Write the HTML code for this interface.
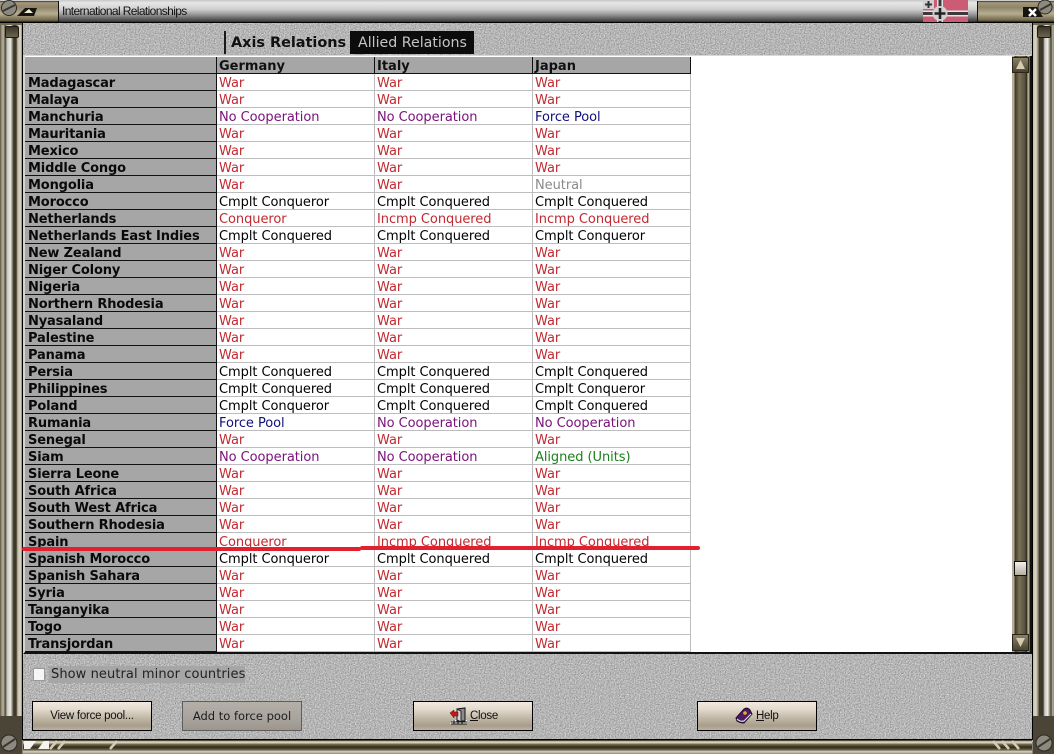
<!DOCTYPE html>
<html><head><meta charset="utf-8"><style>
html,body{margin:0;padding:0;background:#888}
#r{position:relative;width:1054px;height:754px;overflow:hidden;background:#8a8474;font-family:"DejaVu Sans",sans-serif}
#r div{position:absolute;box-sizing:border-box}
.tb{position:absolute;left:25px;top:57px;border-collapse:separate;border-spacing:0;table-layout:fixed;width:666px;background:#fff}
.tb td{height:17px;padding:3px 0 0 2px;font-size:13px;line-height:13px;white-space:nowrap;overflow:hidden;box-sizing:border-box;border-bottom:1px solid #bdbdbd;border-right:1px solid #bdbdbd;color:#000;vertical-align:top;letter-spacing:-.06px}
.tb td:first-child{background:#a6a6a6;font-weight:bold;padding-left:3px;border-right:1px solid #111;border-bottom:1px solid #111;color:#0a0a0a;font-size:13px;letter-spacing:-.15px}
.tb tr.h td{background:#a6a6a6;font-weight:bold;border-right:1px solid #111;border-bottom:1px solid #111;color:#111;letter-spacing:0}
.w{color:#c02a30!important}.n{color:#7a107a!important}.f{color:#10107a!important}.g{color:#1a801a!important}.u{color:#8a8a8a!important}
.btn{border:1px solid #000;background:linear-gradient(#f1e9df 0,#e4dacd 25%,#c4baaa 55%,#a89d8a 85%,#bdb3a3 100%);font:11.5px/28px "Liberation Sans",sans-serif;text-align:center;color:#111;letter-spacing:-.25px}
.rail{background:linear-gradient(90deg,#8d8672 0,#b8b29d 12%,#4a4536 20%,#c9c9c4 30%,#ecebe4 45%,#8a8678 54%,#3d3829 60%,#3d3829 72%,#c4bda6 80%,#ddd7c3 92%,#8f8a78 100%)}
.railr{background:linear-gradient(90deg,#c4bda6 0,#ddd7c3 14%,#8f8a78 24%,#3d3829 30%,#3d3829 48%,#c9c9c4 56%,#ecebe4 70%,#8a8678 80%,#4a4536 86%,#b8b29d 94%,#8d8672 100%)}
.cap{background:linear-gradient(#3a3424 0,#a59a7e 8%,#8f8468 30%,#b7ad90 60%,#6f6549 92%,#1c1810 100%)}
</style></head><body><div id="r">

<!-- textured panel -->
<svg style="position:absolute;left:23px;top:22px" width="1010" height="720"><rect width="1010" height="720" fill="#b4b4b4"/>
<filter id="nz2" x="0" y="0" width="100%" height="100%" color-interpolation-filters="sRGB"><feTurbulence type="fractalNoise" baseFrequency="0.8" numOctaves="2" seed="7"/><feColorMatrix type="saturate" values="0"/><feComponentTransfer><feFuncR type="linear" slope=".7" intercept=".36"/><feFuncG type="linear" slope=".7" intercept=".36"/><feFuncB type="linear" slope=".7" intercept=".36"/><feFuncA type="linear" slope="0" intercept="1"/></feComponentTransfer></filter><rect width="1010" height="720" filter="url(#nz2)"/></svg>

<!-- title bar -->
<div style="left:0;top:0;width:1054px;height:23px;background:linear-gradient(#c8c8c8 0,#e6e6e6 12%,#d0d0d0 40%,#9a9a9a 62%,#555 85%,#3a3a3a 94%,#000 97%)"></div>
<div style="left:62px;top:4px;font:12px/15px 'Liberation Sans',sans-serif;color:#111;letter-spacing:-.62px;white-space:nowrap">International Relationships</div>

<!-- left cap -->
<div class="cap" style="left:0;top:1px;width:59px;height:22px;border-right:1px solid #111;border-bottom:1px solid #000"></div>
<svg style="position:absolute;left:0;top:0" width="60" height="24"><circle cx="9" cy="8" r="7.5" fill="#8c8a80" stroke="#2d2a22"/><path d="M3 11L15 5" stroke="#3a382e" stroke-width="2"/><path d="M17 16L25 8H37L34 16Z" fill="#17150f"/><path d="M24 13L29 9L33 13Z" fill="#f0ead6"/></svg>

<!-- right cap -->
<div class="cap" style="left:977px;top:1px;width:77px;height:22px;border-left:1px solid #111;border-bottom:1px solid #000"></div>
<svg style="position:absolute;left:1000px;top:0" width="54" height="24"><path d="M23 7H37L43 17H23Z" fill="#17150f"/><path d="M29 9L36 16M36 9L29 16" stroke="#fff" stroke-width="2.4"/><circle cx="45" cy="7" r="7" fill="#8c8a80" stroke="#2d2a22"/><path d="M40 10L51 4" stroke="#3a382e" stroke-width="2"/></svg>

<!-- flag -->
<svg style="position:absolute;left:923px;top:0" width="45" height="22"><rect width="45" height="22" fill="#cb5c74"/><rect x="0" y="0" width="11" height="9" fill="#d0d0d0"/><path d="M5.500 1V8M2 4.500H9" stroke="#333" stroke-width="2"/><rect y="12" width="45" height="3" fill="#3a3a3a"/><rect x="15.500" width="3" height="22" fill="#3a3a3a"/><rect y="10.500" width="45" height="1.500" fill="#e4e4e4"/><rect y="15" width="45" height="1.500" fill="#e4e4e4"/><rect x="14" width="1.500" height="22" fill="#e4e4e4"/><rect x="18.500" width="1.500" height="22" fill="#e4e4e4"/><circle cx="17" cy="13.500" r="7.500" fill="#d0d0d0"/><path d="M17 8V19M11.500 13.500H22.500" stroke="#222" stroke-width="2.600"/></svg>

<!-- left frame -->
<div style="left:0;top:23px;width:23px;height:716px;background:#6e6853"></div>
<div class="rail" style="left:1px;top:25px;width:21px;height:692px"></div>
<div style="left:5px;top:26px;width:14px;height:12px;background:linear-gradient(#3b3629,#6a634f);border:1px solid #1d1a12;border-radius:2px"></div>
<div style="left:22px;top:23px;width:1px;height:717px;background:#000"></div>

<!-- right frame -->
<div style="left:1032px;top:23px;width:22px;height:716px;background:#6e6853"></div>
<div class="railr" style="left:1033px;top:25px;width:21px;height:692px"></div>
<div style="left:1037px;top:26px;width:14px;height:12px;background:linear-gradient(#3b3629,#6a634f);border:1px solid #1d1a12;border-radius:2px"></div>
<div style="left:1032px;top:23px;width:1px;height:717px;background:#000"></div>

<!-- corner screws -->
<svg style="position:absolute;left:0;top:716px" width="24" height="38"><rect width="22" height="38" fill="#4a4536"/><circle cx="9" cy="27" r="8" fill="#8c8a80" stroke="#2d2a22"/><path d="M3 31L15 23" stroke="#3a382e" stroke-width="2"/></svg>
<svg style="position:absolute;left:1033px;top:716px" width="21" height="38"><rect width="21" height="38" fill="#4a4536"/><circle cx="11" cy="27" r="8" fill="#8c8a80" stroke="#2d2a22"/><path d="M5 31L17 23" stroke="#3a382e" stroke-width="2"/></svg>

<!-- bottom frame -->
<div style="left:23px;top:739px;width:1009px;height:15px;background:linear-gradient(#000 0,#000 7%,#b7ad90 14%,#e0d8c0 24%,#6f6549 36%,#2e2a1d 55%,#6b634c 72%,#d8d2bd 84%,#8e8874 100%)"></div>
<svg style="position:absolute;left:23px;top:740px" width="100" height="12"><path d="M1 1H13L7 9H1Z" fill="#f4f4f0"/><path d="M21 1H26V9H15Z" fill="#f4f4f0"/><path d="M27 9L34 1M35 9L42 1M87 9L94 1" stroke="#d4cdb6" stroke-width="2.500"/></svg>
<svg style="position:absolute;left:985px;top:740px" width="40" height="12"><path d="M8 1L15 9M17 1L24 9M27 1L34 9" stroke="#d4cdb6" stroke-width="2.500"/></svg>

<!-- tabs -->
<div style="left:224px;top:31px;width:2px;height:23px;background:#1a1a1a"></div>
<div style="left:231px;top:34px;font:bold 14.5px/19px 'DejaVu Sans',sans-serif;color:#111;white-space:nowrap;letter-spacing:-.05px">Axis Relations</div>
<div style="left:350px;top:31px;width:124px;height:23px;background:#0c0c0c;color:#c4c4c4;font:14.2px/24px 'DejaVu Sans',sans-serif;padding-left:8px;white-space:nowrap">Allied Relations</div>

<!-- list area -->
<div style="left:23px;top:55px;width:1008px;height:599px;background:#fff;border-top:1px solid #d8d8d8;border-bottom:2px solid #111;border-left:2px solid #d4d4d4"></div>

<table class="tb"><colgroup><col style="width:192px"><col style="width:158px"><col style="width:158px"><col style="width:158px"></colgroup>
<tr class="h"><td></td><td>Germany</td><td>Italy</td><td>Japan</td></tr>
<tr><td>Madagascar</td><td class="w">War</td><td class="w">War</td><td class="w">War</td></tr>
<tr><td>Malaya</td><td class="w">War</td><td class="w">War</td><td class="w">War</td></tr>
<tr><td>Manchuria</td><td class="n">No Cooperation</td><td class="n">No Cooperation</td><td class="f">Force Pool</td></tr>
<tr><td>Mauritania</td><td class="w">War</td><td class="w">War</td><td class="w">War</td></tr>
<tr><td>Mexico</td><td class="w">War</td><td class="w">War</td><td class="w">War</td></tr>
<tr><td>Middle Congo</td><td class="w">War</td><td class="w">War</td><td class="w">War</td></tr>
<tr><td>Mongolia</td><td class="w">War</td><td class="w">War</td><td class="u">Neutral</td></tr>
<tr><td>Morocco</td><td>Cmplt Conqueror</td><td>Cmplt Conquered</td><td>Cmplt Conquered</td></tr>
<tr><td>Netherlands</td><td class="w">Conqueror</td><td class="w">Incmp Conquered</td><td class="w">Incmp Conquered</td></tr>
<tr><td>Netherlands East Indies</td><td>Cmplt Conquered</td><td>Cmplt Conquered</td><td>Cmplt Conqueror</td></tr>
<tr><td>New Zealand</td><td class="w">War</td><td class="w">War</td><td class="w">War</td></tr>
<tr><td>Niger Colony</td><td class="w">War</td><td class="w">War</td><td class="w">War</td></tr>
<tr><td>Nigeria</td><td class="w">War</td><td class="w">War</td><td class="w">War</td></tr>
<tr><td>Northern Rhodesia</td><td class="w">War</td><td class="w">War</td><td class="w">War</td></tr>
<tr><td>Nyasaland</td><td class="w">War</td><td class="w">War</td><td class="w">War</td></tr>
<tr><td>Palestine</td><td class="w">War</td><td class="w">War</td><td class="w">War</td></tr>
<tr><td>Panama</td><td class="w">War</td><td class="w">War</td><td class="w">War</td></tr>
<tr><td>Persia</td><td>Cmplt Conquered</td><td>Cmplt Conquered</td><td>Cmplt Conquered</td></tr>
<tr><td>Philippines</td><td>Cmplt Conquered</td><td>Cmplt Conquered</td><td>Cmplt Conqueror</td></tr>
<tr><td>Poland</td><td>Cmplt Conqueror</td><td>Cmplt Conquered</td><td>Cmplt Conquered</td></tr>
<tr><td>Rumania</td><td class="f">Force Pool</td><td class="n">No Cooperation</td><td class="n">No Cooperation</td></tr>
<tr><td>Senegal</td><td class="w">War</td><td class="w">War</td><td class="w">War</td></tr>
<tr><td>Siam</td><td class="n">No Cooperation</td><td class="n">No Cooperation</td><td class="g">Aligned (Units)</td></tr>
<tr><td>Sierra Leone</td><td class="w">War</td><td class="w">War</td><td class="w">War</td></tr>
<tr><td>South Africa</td><td class="w">War</td><td class="w">War</td><td class="w">War</td></tr>
<tr><td>South West Africa</td><td class="w">War</td><td class="w">War</td><td class="w">War</td></tr>
<tr><td>Southern Rhodesia</td><td class="w">War</td><td class="w">War</td><td class="w">War</td></tr>
<tr><td>Spain</td><td class="w">Conqueror</td><td class="w">Incmp Conquered</td><td class="w">Incmp Conquered</td></tr>
<tr><td>Spanish Morocco</td><td>Cmplt Conqueror</td><td>Cmplt Conquered</td><td>Cmplt Conquered</td></tr>
<tr><td>Spanish Sahara</td><td class="w">War</td><td class="w">War</td><td class="w">War</td></tr>
<tr><td>Syria</td><td class="w">War</td><td class="w">War</td><td class="w">War</td></tr>
<tr><td>Tanganyika</td><td class="w">War</td><td class="w">War</td><td class="w">War</td></tr>
<tr><td>Togo</td><td class="w">War</td><td class="w">War</td><td class="w">War</td></tr>
<tr><td>Transjordan</td><td class="w">War</td><td class="w">War</td><td class="w">War</td></tr>
</table>

<!-- scrollbar -->
<div style="left:1012px;top:56px;width:18px;height:596px;background:linear-gradient(90deg,#b5ae98 0,#b5ae98 11%,#3d3829 17%,#7a7058 40%,#5a5240 70%,#2e2a1d 83%,#cfc9b5 89%,#4a4435 100%)"></div>
<div style="left:1030px;top:56px;width:2px;height:598px;background:#111"></div>
<div style="left:1012px;top:57px;width:17px;height:16px;background:linear-gradient(#8a8068,#4a4332);border:1px solid #2a261a"></div>
<svg style="position:absolute;left:1012px;top:57px" width="17" height="16"><path d="M8.500 3L13 12H4Z" fill="#d8ccb0"/></svg>
<div style="left:1012px;top:634px;width:17px;height:17px;background:linear-gradient(#8a8068,#4a4332);border:1px solid #2a261a"></div>
<svg style="position:absolute;left:1012px;top:634px" width="17" height="17"><path d="M4 4H13L8.500 13Z" fill="#d8ccb0"/></svg>
<div style="left:1014px;top:561px;width:13px;height:15px;background:linear-gradient(#f4f2ec,#b4aea0);border:1px solid #111"></div>

<!-- red annotation line -->
<div style="left:22px;top:547px;width:339px;height:4px;background:#e3202e;border-radius:2px"></div>
<div style="left:360px;top:546px;width:340px;height:4px;background:#e3202e;border-radius:2px"></div>

<!-- checkbox row -->
<div style="left:49px;top:666px;width:196px;height:17px;background:#a6a6a6"></div>
<div style="left:33px;top:668px;width:12px;height:13px;background:#f6f6f6;border:1px solid #9a9a9a"></div>
<div style="left:51px;top:666px;font:13px/17px 'DejaVu Sans',sans-serif;color:#222;white-space:nowrap;letter-spacing:.08px">Show neutral minor countries</div>

<!-- buttons -->
<div class="btn" style="left:32px;top:701px;width:120px;height:30px">View force pool...</div>
<div class="btn" style="left:182px;top:701px;width:120px;height:30px;background:linear-gradient(#b4afa9,#a8a39c 60%,#9c968d);border-color:#5d5d5d;font:11.5px/28px 'DejaVu Sans',sans-serif;letter-spacing:0;color:#1d1d1d">Add to force pool</div>
<div class="btn" style="left:413px;top:701px;width:120px;height:30px"></div>
<svg style="position:absolute;left:449px;top:707px" width="20" height="18"><path d="M1 17L4 13H18V17Z" fill="#fff"/><path d="M2 15H18M2 17H18M5 13V17M9 13V17M13 13V17" stroke="#111"/><path d="M8 2L16 1V14H8Z" fill="#8b8b8b" stroke="#111"/><path d="M8 2L12 4V15L8 13Z" fill="#d5d5d5" stroke="#222"/><path d="M1 6L5 3V5H9V9H5V11Z" fill="#c2181f" stroke="#5a0808" stroke-width=".5"/></svg>
<div style="left:470px;top:701px;font:11.5px/30px 'Liberation Sans',sans-serif;color:#111;white-space:nowrap;letter-spacing:-.3px"><span style="text-decoration:underline">C</span>lose</div>
<div class="btn" style="left:697px;top:701px;width:120px;height:30px"></div>
<svg style="position:absolute;left:735px;top:707px" width="18" height="17"><path d="M1 11L9 2Q12 0 15 3L17 7L9 16Q5 16 2 14Z" fill="#4d1a68" stroke="#1d0a29"/><path d="M2 12Q5 15 9 14L16 7" fill="none" stroke="#ddd" stroke-width="1.200"/><circle cx="10" cy="6" r="1.800" fill="#e8b020"/></svg>
<div style="left:756px;top:701px;font:11.5px/30px 'Liberation Sans',sans-serif;color:#111;white-space:nowrap;letter-spacing:-.3px"><span style="text-decoration:underline">H</span>elp</div>

</div></body></html>
